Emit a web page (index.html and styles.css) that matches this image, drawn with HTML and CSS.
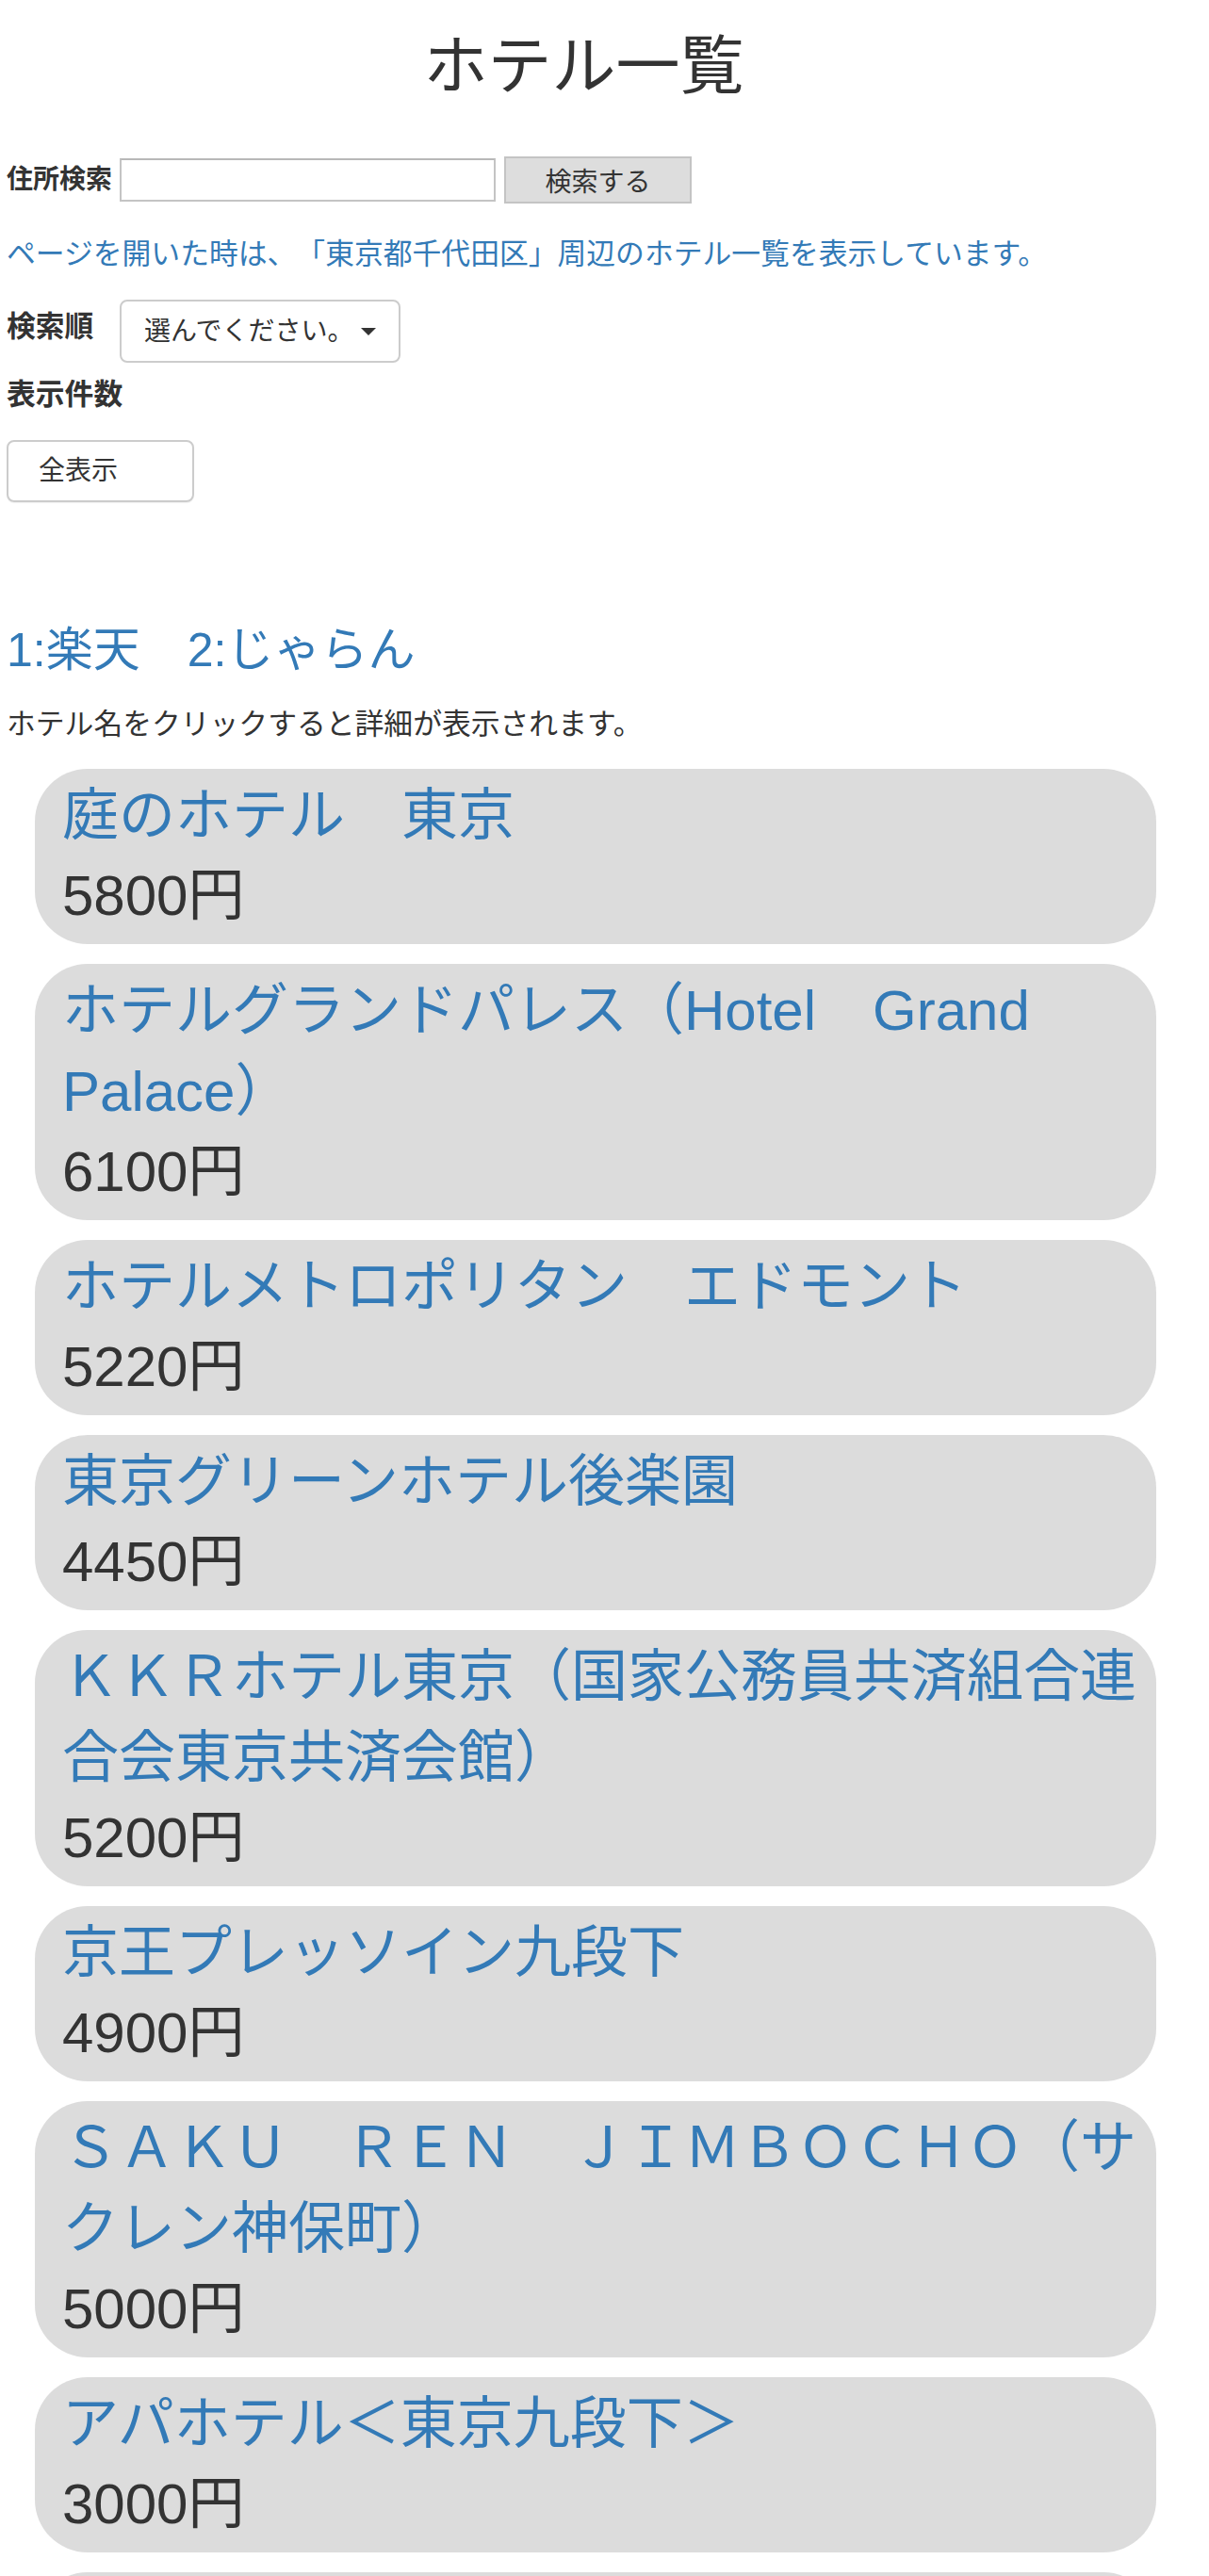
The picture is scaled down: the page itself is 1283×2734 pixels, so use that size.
FILE: index.html
```html
<!DOCTYPE html>
<html lang="ja">
<head>
<meta charset="utf-8">
<title>ホテル一覧</title>
<link rel="stylesheet" href="styles.css">
</head>
<body>
<h1 class="title">ホテル一覧</h1>

<form class="search">
  <label class="search-label">住所検索</label>
  <input class="search-input" type="text">
  <button class="search-btn" type="button">検索する</button>
</form>

<p class="notice">ページを開いた時は、「東京都千代田区」周辺のホテル一覧を表示しています。</p>

<div class="order">
  <span class="order-label">検索順</span>
  <button class="dropdown" type="button">選んでください。<span class="caret"></span></button>
</div>

<div class="count-label">表示件数</div>
<div class="count-box">全表示</div>

<h3 class="sources">1:楽天　2:じゃらん</h3>
<p class="hint">ホテル名をクリックすると詳細が表示されます。</p>

<ul class="hotels">
  <li class="hotel"><a class="hotel-name">庭のホテル　東京</a><div class="hotel-price">5800円</div></li>
  <li class="hotel"><a class="hotel-name">ホテルグランドパレス（Hotel　Grand　Palace）</a><div class="hotel-price">6100円</div></li>
  <li class="hotel"><a class="hotel-name">ホテルメトロポリタン　エドモント</a><div class="hotel-price">5220円</div></li>
  <li class="hotel"><a class="hotel-name">東京グリーンホテル後楽園</a><div class="hotel-price">4450円</div></li>
  <li class="hotel"><a class="hotel-name">ＫＫＲホテル東京（国家公務員共済組合連合会東京共済会館）</a><div class="hotel-price">5200円</div></li>
  <li class="hotel"><a class="hotel-name">京王プレッソイン九段下</a><div class="hotel-price">4900円</div></li>
  <li class="hotel"><a class="hotel-name">ＳＡＫＵ　ＲＥＮ　ＪＩＭＢＯＣＨＯ（サクレン神保町）</a><div class="hotel-price">5000円</div></li>
  <li class="hotel"><a class="hotel-name">アパホテル＜東京九段下＞</a><div class="hotel-price">3000円</div></li>
  <li class="hotel"><a class="hotel-name">ホテルモントレ半蔵門</a><div class="hotel-price">6500円</div></li>
</ul>
</body>
</html>
```

FILE: styles.css
```css
html, body {
  margin: 0;
  padding: 0;
  background: #ffffff;
}

body {
  font-family: "Liberation Sans", "Noto Sans CJK JP", sans-serif;
  font-size: 30.8px;
  line-height: 43px;
  color: #333333;
  text-spacing-trim: space-all;
}

.title {
  margin: 30px 0 0;
  padding-right: 44px;
  font-size: 68px;
  line-height: 80px;
  font-weight: normal;
  text-align: center;
  color: #333333;
}

.search {
  display: flex;
  align-items: center;
  height: 50px;
  margin: 56px 0 0;
  padding-left: 7px;
}

.search-label {
  width: 120px;
  font-size: 28px;
  font-weight: bold;
  line-height: 40px;
}

.search-input {
  box-sizing: border-box;
  width: 399px;
  height: 46px;
  margin: 0 9px 0 0;
  padding: 0 6px;
  border: 2px solid #c4c4c4;
  border-top-color: #b8b8b8;
  background: #ffffff;
  font-family: inherit;
  font-size: 28px;
}

.search-btn {
  box-sizing: border-box;
  width: 199px;
  height: 50px;
  margin: 0;
  padding: 0;
  border: 2px solid #c4c4c4;
  background: #dddddd;
  font-family: inherit;
  font-size: 28px;
  color: #333333;
}

.notice {
  margin: 32px 0 0;
  padding-left: 7px;
  color: #337ab7;
}

.order {
  display: flex;
  align-items: flex-start;
  margin-top: 27px;
  padding-left: 7px;
}

.order-label {
  width: 120px;
  padding-top: 7px;
  font-weight: bold;
}

.dropdown {
  display: flex;
  align-items: center;
  box-sizing: border-box;
  height: 67px;
  margin: 0;
  padding: 0 24px;
  border: 2px solid #cccccc;
  border-radius: 8px;
  background: #ffffff;
  font-family: inherit;
  font-size: 28px;
  line-height: 40px;
  color: #333333;
}

.caret {
  display: inline-block;
  width: 0;
  height: 0;
  margin-left: 7px;
  border-top: 8px solid #333333;
  border-left: 8px solid transparent;
  border-right: 8px solid transparent;
}

.count-label {
  margin-top: 12px;
  padding-left: 7px;
  font-weight: bold;
}

.count-box {
  box-sizing: border-box;
  width: 199px;
  height: 66px;
  margin: 27px 0 0 7px;
  padding-left: 32px;
  border: 2px solid #cccccc;
  border-radius: 8px;
  box-shadow: 0 1px 1px rgba(0, 0, 0, 0.06);
  font-size: 28px;
  line-height: 62px;
  color: #333333;
}

.sources {
  margin: 130px 0 0;
  padding-left: 7px;
  font-size: 50px;
  line-height: 54px;
  font-weight: normal;
  color: #337ab7;
}

.hint {
  margin: 30px 0 0;
  padding-left: 7px;
}

.hotels {
  list-style: none;
  margin: 26px 56px 0 37px;
  padding: 0;
}

.hotel {
  margin-bottom: 21px;
  padding: 7px 10px 10px 29px;
  border-radius: 56px;
  background: #dcdcdc;
}

.hotel-name {
  display: block;
  font-size: 60px;
  line-height: 86px;
  color: #337ab7;
  text-decoration: none;
}

.hotel-price {
  font-size: 60px;
  line-height: 83px;
  color: #333333;
}
```
